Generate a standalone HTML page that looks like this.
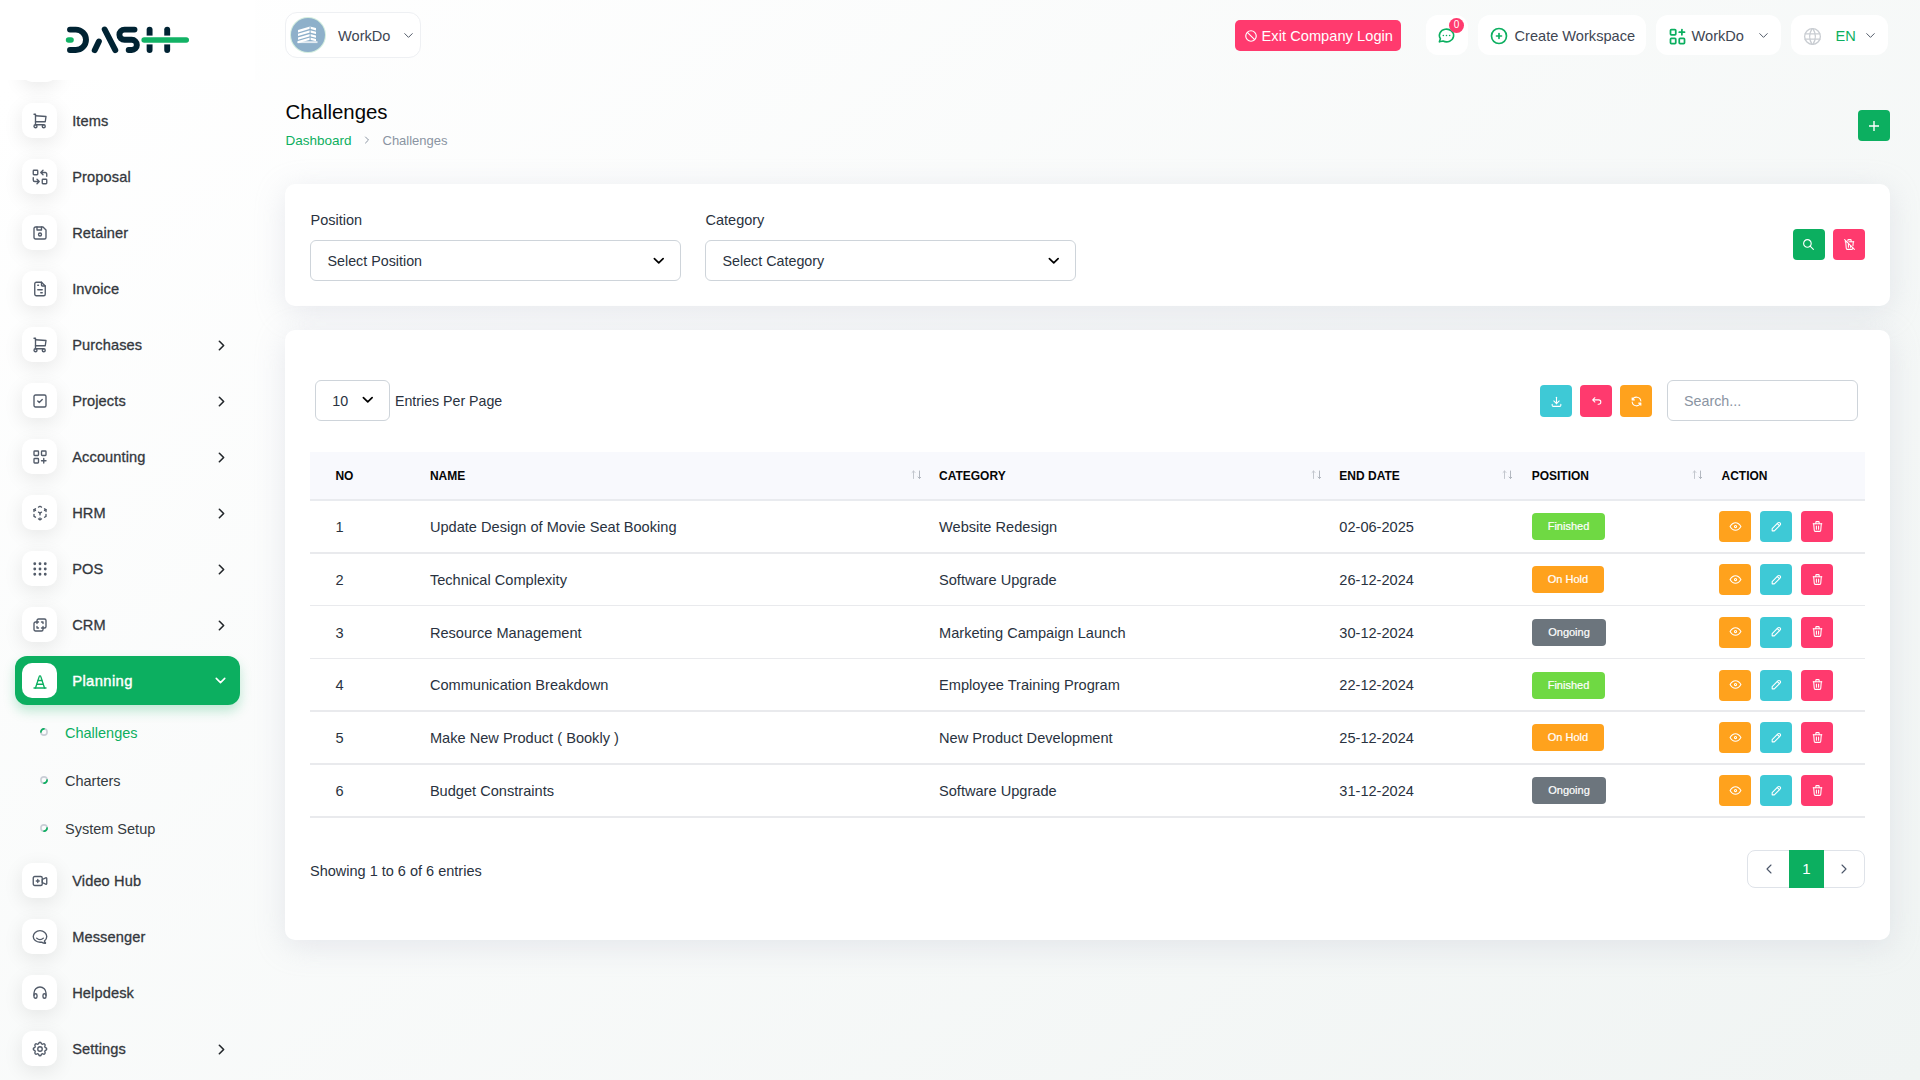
<!DOCTYPE html>
<html><head><meta charset="utf-8"><title>Challenges</title>
<style>
html,body{margin:0;padding:0}
body{width:1920px;height:1080px;overflow:hidden;position:relative;font-family:"Liberation Sans",sans-serif;
background:linear-gradient(141.55deg, rgba(240,244,243,0) 3.46%, #f0f4f3 99.86%), #ffffff;}
.a{position:absolute;box-sizing:content-box}
.t{white-space:nowrap}
.a svg{display:block}
.ib{background:#fff;border-radius:10px;box-shadow:0 5px 20px rgba(0,0,0,0.09)}
.hb{background:#fff;border-radius:12px}
.card{background:#fff;border-radius:10px;box-shadow:0 6px 30px rgba(182,186,203,0.3)}
</style></head><body>
<div class="a ib" style="left:22px;top:46.5px;width:35px;height:35px"></div>
<div class="a" style="left:0;top:0;width:255px;height:80px;background:#fff"></div>
<svg class="a" style="left:0;top:0" width="255" height="80" viewBox="0 0 255 80" fill="none" stroke-linecap="round" stroke-linejoin="round">
<g stroke="#002333" stroke-width="5.9">
<path d="M70 29.6 H75.8 A10.2 10.2 0 0 1 75.8 50 H70"/>
<path d="M94.7 50.2 L98.9 41.5"/>
<path d="M104.7 29.5 L115.3 50.2"/>
<path d="M134.5 29.6 H124.5 A5.1 5.1 0 0 0 124.5 39.8 H131.75 A5.1 5.1 0 0 1 131.75 50 H128.7"/>
<path d="M149.6 29.6 V50"/>
<path d="M167.2 29.6 V50"/>
</g>
<rect x="144" y="35.6" width="28" height="8.8" fill="#fff" stroke="none"/>
<g stroke="#12B265" stroke-width="5.6">
<path d="M68.6 40 H71"/>
<path d="M144.2 40 H186.2"/>
</g>
</svg>
<div class="a ib" style="left:22px;top:102.5px;width:35px;height:35px"></div>
<div class="a" style="left:30.5px;top:112px;width:18px;height:18px"><svg width="18" height="18" viewBox="0 0 24 24" fill="none" stroke="#525b69" stroke-width="1.8" stroke-linecap="round" stroke-linejoin="round" ><circle cx="6" cy="19" r="2"/><circle cx="17" cy="19" r="2"/><path d="M17 17h-11v-14h-2"/><path d="M6 5l14 1l-1 7h-13"/></svg></div>
<div class="a t" style="left:72.2px;top:113.38px;font-size:14.6px;line-height:17.52px;color:#34383d;font-weight:400;letter-spacing:0.12px;-webkit-text-stroke:0.3px #34383d;">Items</div>
<div class="a ib" style="left:22px;top:158.5px;width:35px;height:35px"></div>
<div class="a" style="left:30.5px;top:168px;width:18px;height:18px"><svg width="18" height="18" viewBox="0 0 24 24" fill="none" stroke="#525b69" stroke-width="1.8" stroke-linecap="round" stroke-linejoin="round" ><rect x="3" y="3" width="6" height="6" rx="1"/><rect x="15" y="15" width="6" height="6" rx="1"/><path d="M21 11v-3a2 2 0 0 0 -2 -2h-6l3 3m0 -6l-3 3"/><path d="M3 13v3a2 2 0 0 0 2 2h6l-3 -3m0 6l3 -3"/></svg></div>
<div class="a t" style="left:72.2px;top:169.38px;font-size:14.6px;line-height:17.52px;color:#34383d;font-weight:400;letter-spacing:0.12px;-webkit-text-stroke:0.3px #34383d;">Proposal</div>
<div class="a ib" style="left:22px;top:214.5px;width:35px;height:35px"></div>
<div class="a" style="left:30.5px;top:224px;width:18px;height:18px"><svg width="18" height="18" viewBox="0 0 24 24" fill="none" stroke="#525b69" stroke-width="1.8" stroke-linecap="round" stroke-linejoin="round" ><path d="M6 4h10l4 4v10a2 2 0 0 1 -2 2h-12a2 2 0 0 1 -2 -2v-12a2 2 0 0 1 2 -2"/><circle cx="12" cy="14" r="2"/><polyline points="14 4 14 8 8 8 8 4"/></svg></div>
<div class="a t" style="left:72.2px;top:225.38px;font-size:14.6px;line-height:17.52px;color:#34383d;font-weight:400;letter-spacing:0.12px;-webkit-text-stroke:0.3px #34383d;">Retainer</div>
<div class="a ib" style="left:22px;top:270.5px;width:35px;height:35px"></div>
<div class="a" style="left:30.5px;top:280px;width:18px;height:18px"><svg width="18" height="18" viewBox="0 0 24 24" fill="none" stroke="#525b69" stroke-width="1.8" stroke-linecap="round" stroke-linejoin="round" ><path d="M14 3v4a1 1 0 0 0 1 1h4"/><path d="M17 21h-10a2 2 0 0 1 -2 -2v-14a2 2 0 0 1 2 -2h7l5 5v11a2 2 0 0 1 -2 2z"/><line x1="9" y1="7" x2="10" y2="7"/><line x1="9" y1="13" x2="15" y2="13"/><line x1="13" y1="17" x2="15" y2="17"/></svg></div>
<div class="a t" style="left:72.2px;top:281.38px;font-size:14.6px;line-height:17.52px;color:#34383d;font-weight:400;letter-spacing:0.12px;-webkit-text-stroke:0.3px #34383d;">Invoice</div>
<div class="a ib" style="left:22px;top:326.5px;width:35px;height:35px"></div>
<div class="a" style="left:30.5px;top:336px;width:18px;height:18px"><svg width="18" height="18" viewBox="0 0 24 24" fill="none" stroke="#525b69" stroke-width="1.8" stroke-linecap="round" stroke-linejoin="round" ><circle cx="6" cy="19" r="2"/><circle cx="17" cy="19" r="2"/><path d="M17 17h-11v-14h-2"/><path d="M6 5l14 1l-1 7h-13"/></svg></div>
<div class="a t" style="left:72.2px;top:337.38px;font-size:14.6px;line-height:17.52px;color:#34383d;font-weight:400;letter-spacing:0.12px;-webkit-text-stroke:0.3px #34383d;">Purchases</div>
<div class="a" style="left:213.3px;top:337.35px;width:17px;height:17px"><svg width="17" height="17" viewBox="0 0 24 24" fill="none" stroke="#23272b" stroke-width="2.3" stroke-linecap="round" stroke-linejoin="round" ><polyline points="9 6 15 12 9 18"/></svg></div>
<div class="a ib" style="left:22px;top:382.5px;width:35px;height:35px"></div>
<div class="a" style="left:30.5px;top:392px;width:18px;height:18px"><svg width="18" height="18" viewBox="0 0 24 24" fill="none" stroke="#525b69" stroke-width="1.8" stroke-linecap="round" stroke-linejoin="round" ><rect x="4" y="4" width="16" height="16" rx="2"/><path d="M9 12l2 2l4 -4"/></svg></div>
<div class="a t" style="left:72.2px;top:393.38px;font-size:14.6px;line-height:17.52px;color:#34383d;font-weight:400;letter-spacing:0.12px;-webkit-text-stroke:0.3px #34383d;">Projects</div>
<div class="a" style="left:213.3px;top:393.35px;width:17px;height:17px"><svg width="17" height="17" viewBox="0 0 24 24" fill="none" stroke="#23272b" stroke-width="2.3" stroke-linecap="round" stroke-linejoin="round" ><polyline points="9 6 15 12 9 18"/></svg></div>
<div class="a ib" style="left:22px;top:438.5px;width:35px;height:35px"></div>
<div class="a" style="left:30.5px;top:448px;width:18px;height:18px"><svg width="18" height="18" viewBox="0 0 24 24" fill="none" stroke="#525b69" stroke-width="1.8" stroke-linecap="round" stroke-linejoin="round" ><rect x="4" y="4" width="6" height="6" rx="1"/><rect x="14" y="4" width="6" height="6" rx="1"/><rect x="4" y="14" width="6" height="6" rx="1"/><path d="M14 17h6m-3 -3v6"/></svg></div>
<div class="a t" style="left:72.2px;top:449.38px;font-size:14.6px;line-height:17.52px;color:#34383d;font-weight:400;letter-spacing:0.12px;-webkit-text-stroke:0.3px #34383d;">Accounting</div>
<div class="a" style="left:213.3px;top:449.35px;width:17px;height:17px"><svg width="17" height="17" viewBox="0 0 24 24" fill="none" stroke="#23272b" stroke-width="2.3" stroke-linecap="round" stroke-linejoin="round" ><polyline points="9 6 15 12 9 18"/></svg></div>
<div class="a ib" style="left:22px;top:494.5px;width:35px;height:35px"></div>
<div class="a" style="left:30.5px;top:504px;width:18px;height:18px"><svg width="18" height="18" viewBox="0 0 24 24" fill="none" stroke="#525b69" stroke-width="1.8" stroke-linecap="round" stroke-linejoin="round" ><path d="M6 17.6l-2 -1.1v-2.5"/><path d="M4 10v-2.5l2 -1.1"/><path d="M10 4.1l2 -1.1l2 1.1"/><path d="M18 6.4l2 1.1v2.5"/><path d="M20 14v2.5l-2 1.12"/><path d="M14 19.9l-2 1.1l-2 -1.1"/><line x1="12" y1="12" x2="14" y2="10.9"/><line x1="18" y1="8.6" x2="20" y2="7.5"/><line x1="12" y1="12" x2="12" y2="14.5"/><line x1="12" y1="18.5" x2="12" y2="21"/><path d="M12 12l-2 -1.12"/><line x1="6" y1="8.6" x2="4" y2="7.5"/></svg></div>
<div class="a t" style="left:72.2px;top:505.38px;font-size:14.6px;line-height:17.52px;color:#34383d;font-weight:400;letter-spacing:0.12px;-webkit-text-stroke:0.3px #34383d;">HRM</div>
<div class="a" style="left:213.3px;top:505.35px;width:17px;height:17px"><svg width="17" height="17" viewBox="0 0 24 24" fill="none" stroke="#23272b" stroke-width="2.3" stroke-linecap="round" stroke-linejoin="round" ><polyline points="9 6 15 12 9 18"/></svg></div>
<div class="a ib" style="left:22px;top:550.5px;width:35px;height:35px"></div>
<div class="a" style="left:30.5px;top:560px;width:18px;height:18px"><svg width="18" height="18" viewBox="0 0 24 24" fill="none" stroke="#525b69" stroke-width="1.8" stroke-linecap="round" stroke-linejoin="round" ><circle cx="5" cy="5" r="1"/><circle cx="5" cy="12" r="1"/><circle cx="5" cy="19" r="1"/><circle cx="12" cy="5" r="1"/><circle cx="12" cy="12" r="1"/><circle cx="12" cy="19" r="1"/><circle cx="19" cy="5" r="1"/><circle cx="19" cy="12" r="1"/><circle cx="19" cy="19" r="1"/></svg></div>
<div class="a t" style="left:72.2px;top:561.38px;font-size:14.6px;line-height:17.52px;color:#34383d;font-weight:400;letter-spacing:0.12px;-webkit-text-stroke:0.3px #34383d;">POS</div>
<div class="a" style="left:213.3px;top:561.35px;width:17px;height:17px"><svg width="17" height="17" viewBox="0 0 24 24" fill="none" stroke="#23272b" stroke-width="2.3" stroke-linecap="round" stroke-linejoin="round" ><polyline points="9 6 15 12 9 18"/></svg></div>
<div class="a ib" style="left:22px;top:606.5px;width:35px;height:35px"></div>
<div class="a" style="left:30.5px;top:616px;width:18px;height:18px"><svg width="18" height="18" viewBox="0 0 24 24" fill="none" stroke="#525b69" stroke-width="1.8" stroke-linecap="round" stroke-linejoin="round" ><path d="M16 16v2a2 2 0 0 1 -2 2h-8a2 2 0 0 1 -2 -2v-8a2 2 0 0 1 2 -2h2v-2a2 2 0 0 1 2 -2h8a2 2 0 0 1 2 2v8a2 2 0 0 1 -2 2h-2"/><path d="M10 8l-2 0l0 2"/><path d="M8 14l0 2l2 0"/><path d="M14 8l2 0l0 2"/><path d="M16 14l0 2l-2 0"/></svg></div>
<div class="a t" style="left:72.2px;top:617.38px;font-size:14.6px;line-height:17.52px;color:#34383d;font-weight:400;letter-spacing:0.12px;-webkit-text-stroke:0.3px #34383d;">CRM</div>
<div class="a" style="left:213.3px;top:617.35px;width:17px;height:17px"><svg width="17" height="17" viewBox="0 0 24 24" fill="none" stroke="#23272b" stroke-width="2.3" stroke-linecap="round" stroke-linejoin="round" ><polyline points="9 6 15 12 9 18"/></svg></div>
<div class="a" style="left:15px;top:656px;width:225px;height:49px;background:#0CAF60;border-radius:12px;box-shadow:0 6px 12px rgba(12,175,96,0.25)"></div>
<div class="a" style="left:22px;top:663px;width:35px;height:35px;background:#fff;border-radius:10px"></div>
<div class="a" style="left:30.5px;top:672.5px;width:18px;height:18px"><svg width="18" height="18" viewBox="0 0 24 24" fill="none" stroke="#0CAF60" stroke-width="1.8" stroke-linecap="round" stroke-linejoin="round" ><line x1="4" y1="20" x2="20" y2="20"/><path d="M9.4 10h5.2"/><path d="M7.8 15h8.4"/><path d="M6 20l5 -15.5c.18 -.9 1.82 -.9 2 0l5 15.5"/></svg></div>
<div class="a t" style="left:72.2px;top:673.19px;font-size:14.8px;line-height:17.76px;color:#fff;font-weight:400;letter-spacing:0.38px;-webkit-text-stroke:0.4px #fff;">Planning</div>
<div class="a" style="left:212px;top:672px;width:17px;height:17px"><svg width="17" height="17" viewBox="0 0 24 24" fill="none" stroke="#fff" stroke-width="2.2" stroke-linecap="round" stroke-linejoin="round" ><polyline points="6 9 12 15 18 9"/></svg></div>
<svg class="a" style="left:39px;top:726.7px" width="10" height="10" viewBox="0 0 10 10" fill="none"><circle cx="5" cy="5" r="3.1" stroke="#c9ced6" stroke-width="1.6"/><path d="M1.95 5.6 A3.1 3.1 0 0 1 5.6 1.95" stroke="#0CAF60" stroke-width="1.7"/></svg>
<div class="a t" style="left:65px;top:724.78px;font-size:14.5px;line-height:17.40px;color:#0CAF60;font-weight:400;">Challenges</div>
<svg class="a" style="left:39px;top:774.7px" width="10" height="10" viewBox="0 0 10 10" fill="none"><circle cx="5" cy="5" r="3.1" stroke="#c9ced6" stroke-width="1.6"/><path d="M8.05 4.4 A3.1 3.1 0 0 1 4.4 8.05" stroke="#0CAF60" stroke-width="1.7"/></svg>
<div class="a t" style="left:65px;top:772.78px;font-size:14.5px;line-height:17.40px;color:#343a40;font-weight:400;">Charters</div>
<svg class="a" style="left:39px;top:822.7px" width="10" height="10" viewBox="0 0 10 10" fill="none"><circle cx="5" cy="5" r="3.1" stroke="#c9ced6" stroke-width="1.6"/><path d="M8.05 4.4 A3.1 3.1 0 0 1 4.4 8.05" stroke="#0CAF60" stroke-width="1.7"/></svg>
<div class="a t" style="left:65px;top:820.78px;font-size:14.5px;line-height:17.40px;color:#343a40;font-weight:400;">System Setup</div>
<div class="a ib" style="left:22px;top:862.5px;width:35px;height:35px"></div>
<div class="a" style="left:30.5px;top:872px;width:18px;height:18px"><svg width="18" height="18" viewBox="0 0 24 24" fill="none" stroke="#525b69" stroke-width="1.8" stroke-linecap="round" stroke-linejoin="round" ><path d="M15 10l4.553 -2.276a1 1 0 0 1 1.447 .894v6.764a1 1 0 0 1 -1.447 .894l-4.553 -2.276v-4z"/><rect x="3" y="6" width="12" height="12" rx="2"/><line x1="7" y1="12" x2="11" y2="12"/><line x1="9" y1="10" x2="9" y2="14"/></svg></div>
<div class="a t" style="left:72.2px;top:873.38px;font-size:14.6px;line-height:17.52px;color:#34383d;font-weight:400;letter-spacing:0.12px;-webkit-text-stroke:0.3px #34383d;">Video Hub</div>
<div class="a ib" style="left:22px;top:918.5px;width:35px;height:35px"></div>
<div class="a" style="left:30.5px;top:928px;width:18px;height:18px"><svg width="18" height="18" viewBox="0 0 24 24" fill="none" stroke="#525b69" stroke-width="1.8" stroke-linecap="round" stroke-linejoin="round" ><path d="M17.802 17.292s.077 -.055 .2 -.149c1.843 -1.425 3 -3.49 3 -5.789c0 -4.286 -4.03 -7.764 -9 -7.764c-4.97 0 -9 3.478 -9 7.764c0 4.288 4.03 7.646 9 7.646c.424 0 1.12 -.028 2.088 -.084c1.262 .82 3.104 1.493 4.716 1.493c.499 0 .734 -.41 .414 -.828c-.486 -.596 -1.156 -1.551 -1.416 -2.29z"/><path d="M7.5 13.5c2.5 2.5 6.5 2.5 9 0"/></svg></div>
<div class="a t" style="left:72.2px;top:929.38px;font-size:14.6px;line-height:17.52px;color:#34383d;font-weight:400;letter-spacing:0.12px;-webkit-text-stroke:0.3px #34383d;">Messenger</div>
<div class="a ib" style="left:22px;top:974.5px;width:35px;height:35px"></div>
<div class="a" style="left:30.5px;top:984px;width:18px;height:18px"><svg width="18" height="18" viewBox="0 0 24 24" fill="none" stroke="#525b69" stroke-width="1.8" stroke-linecap="round" stroke-linejoin="round" ><rect x="4" y="13" rx="2" width="4" height="6"/><rect x="16" y="13" rx="2" width="4" height="6"/><path d="M4 15v-3a8 8 0 0 1 16 0v3"/></svg></div>
<div class="a t" style="left:72.2px;top:985.38px;font-size:14.6px;line-height:17.52px;color:#34383d;font-weight:400;letter-spacing:0.12px;-webkit-text-stroke:0.3px #34383d;">Helpdesk</div>
<div class="a ib" style="left:22px;top:1030.5px;width:35px;height:35px"></div>
<div class="a" style="left:30.5px;top:1040px;width:18px;height:18px"><svg width="18" height="18" viewBox="0 0 24 24" fill="none" stroke="#525b69" stroke-width="1.8" stroke-linecap="round" stroke-linejoin="round" ><path d="M10.325 4.317c.426 -1.756 2.924 -1.756 3.35 0a1.724 1.724 0 0 0 2.573 1.066c1.543 -.94 3.31 .826 2.37 2.37a1.724 1.724 0 0 0 1.065 2.572c1.756 .426 1.756 2.924 0 3.35a1.724 1.724 0 0 0 -1.066 2.573c.94 1.543 -.826 3.31 -2.37 2.37a1.724 1.724 0 0 0 -2.572 1.065c-.426 1.756 -2.924 1.756 -3.35 0a1.724 1.724 0 0 0 -2.573 -1.066c-1.543 .94 -3.31 -.826 -2.37 -2.37a1.724 1.724 0 0 0 -1.065 -2.572c-1.756 -.426 -1.756 -2.924 0 -3.35a1.724 1.724 0 0 0 1.066 -2.573c-.94 -1.543 .826 -3.31 2.37 -2.37c1 .608 2.296 .07 2.572 -1.065z"/><circle cx="12" cy="12" r="3"/></svg></div>
<div class="a t" style="left:72.2px;top:1041.38px;font-size:14.6px;line-height:17.52px;color:#34383d;font-weight:400;letter-spacing:0.12px;-webkit-text-stroke:0.3px #34383d;">Settings</div>
<div class="a" style="left:213.3px;top:1041.35px;width:17px;height:17px"><svg width="17" height="17" viewBox="0 0 24 24" fill="none" stroke="#23272b" stroke-width="2.3" stroke-linecap="round" stroke-linejoin="round" ><polyline points="9 6 15 12 9 18"/></svg></div>
<div class="a" style="left:285px;top:12px;width:134px;height:44px;background:#fff;border:1px solid #eef0f3;border-radius:12px"></div>
<div class="a" style="left:291px;top:18px;width:34px;height:34px;border-radius:50%;background:#8eb0ca;box-shadow:0 0 0 1px #d4eedf"></div>
<svg class="a" style="left:291px;top:18px" width="34" height="34" viewBox="0 0 34 34" fill="#fff"><path d="M7 12.1 L19 8.5 L25 10.1 V12.4 L19 10.8 L7 14.4Z"/><path d="M7 15.8 L19 12.2 L25 13.8 V16.1 L19 14.5 L7 18.1Z"/><path d="M7 19.5 L19 15.9 L25 17.5 V19.8 L19 18.2 L7 21.8Z"/><path d="M7 23.0 L19 19.4 L25 21.0 V23.3 L19 21.7 L7 25.3Z"/><rect x="18.6" y="8.5" width="1" height="15" fill="#8eb0ca"/><rect x="6.2" y="23.2" width="20.3" height="1.9" opacity="0.75"/></svg>
<div class="a t" style="left:338px;top:28.38px;font-size:14.6px;line-height:17.52px;color:#3e4653;font-weight:400;">WorkDo</div>
<div class="a" style="left:401px;top:28px;width:15px;height:15px"><svg width="15" height="15" viewBox="0 0 24 24" fill="none" stroke="#525b69" stroke-width="1.6" stroke-linecap="round" stroke-linejoin="round" ><polyline points="6 9 12 15 18 9"/></svg></div>
<div class="a" style="left:1235px;top:20px;width:166px;height:31px;background:#FF3A6E;border-radius:5px"></div>
<div class="a" style="left:1243.5px;top:29px;width:14px;height:14px"><svg width="14" height="14" viewBox="0 0 24 24" fill="none" stroke="#fff" stroke-width="2" stroke-linecap="round" stroke-linejoin="round" ><circle cx="12" cy="12" r="9"/><line x1="5.7" y1="5.7" x2="18.3" y2="18.3"/></svg></div>
<div class="a t" style="left:1261.5px;top:27.88px;font-size:14.6px;line-height:17.52px;color:#fff;font-weight:400;letter-spacing:0.05px;">Exit Company Login</div>
<div class="a hb" style="left:1426px;top:15px;width:42px;height:40px"></div>
<div class="a" style="left:1437px;top:26px;width:19px;height:19px"><svg width="19" height="19" viewBox="0 0 24 24" fill="none" stroke="#0CAF60" stroke-width="2" stroke-linecap="round" stroke-linejoin="round" ><path d="M3 20l1.3 -3.9a9 8 0 1 1 3.4 2.9l-4.7 1"/><line x1="12" y1="12" x2="12" y2="12.01"/><line x1="8" y1="12" x2="8" y2="12.01"/><line x1="16" y1="12" x2="16" y2="12.01"/></svg></div>
<div class="a" style="left:1449px;top:18px;width:15px;height:15px;border-radius:50%;background:#FF3A6E;color:#fff;font-size:10px;line-height:14px;text-align:center">0</div>
<div class="a hb" style="left:1478px;top:15px;width:168px;height:40px"></div>
<div class="a" style="left:1489.1px;top:25.9px;width:20px;height:20px"><svg width="20" height="20" viewBox="0 0 24 24" fill="none" stroke="#0CAF60" stroke-width="2" stroke-linecap="round" stroke-linejoin="round" ><circle cx="12" cy="12" r="9"/><line x1="9" y1="12" x2="15" y2="12"/><line x1="12" y1="9" x2="12" y2="15"/></svg></div>
<div class="a t" style="left:1514.5px;top:28.48px;font-size:14.6px;line-height:17.52px;color:#3e4653;font-weight:400;">Create Workspace</div>
<div class="a hb" style="left:1656px;top:15px;width:125px;height:40px"></div>
<div class="a" style="left:1666.5px;top:25.5px;width:21px;height:21px"><svg width="21" height="21" viewBox="0 0 24 24" fill="none" stroke="#0CAF60" stroke-width="2" stroke-linecap="round" stroke-linejoin="round" ><rect x="4" y="4" width="6" height="6" rx="1"/><rect x="4" y="14" width="6" height="6" rx="1"/><rect x="14" y="14" width="6" height="6" rx="1"/><line x1="14" y1="7" x2="20" y2="7"/><line x1="17" y1="4" x2="17" y2="10"/></svg></div>
<div class="a t" style="left:1691.5px;top:28.48px;font-size:14.6px;line-height:17.52px;color:#3e4653;font-weight:400;">WorkDo</div>
<div class="a" style="left:1755.5px;top:28px;width:15px;height:15px"><svg width="15" height="15" viewBox="0 0 24 24" fill="none" stroke="#525b69" stroke-width="1.6" stroke-linecap="round" stroke-linejoin="round" ><polyline points="6 9 12 15 18 9"/></svg></div>
<div class="a hb" style="left:1791px;top:15px;width:97px;height:40px"></div>
<div class="a" style="left:1801.6px;top:25.5px;width:21px;height:21px"><svg width="21" height="21" viewBox="0 0 24 24" fill="none" stroke="#c9cdd2" stroke-width="1.5" stroke-linecap="round" stroke-linejoin="round" ><circle cx="12" cy="12" r="9"/><line x1="3.6" y1="9" x2="20.4" y2="9"/><line x1="3.6" y1="15" x2="20.4" y2="15"/><path d="M11.5 3a17 17 0 0 0 0 18"/><path d="M12.5 3a17 17 0 0 1 0 18"/></svg></div>
<div class="a t" style="left:1835.5px;top:28.48px;font-size:14.6px;line-height:17.52px;color:#0CAF60;font-weight:400;">EN</div>
<div class="a" style="left:1863px;top:28px;width:15px;height:15px"><svg width="15" height="15" viewBox="0 0 24 24" fill="none" stroke="#525b69" stroke-width="1.6" stroke-linecap="round" stroke-linejoin="round" ><polyline points="6 9 12 15 18 9"/></svg></div>
<div class="a t" style="left:285.5px;top:100.29px;font-size:20.4px;line-height:24.48px;color:#060606;font-weight:400;">Challenges</div>
<div class="a t" style="left:285.5px;top:132.92px;font-size:13.5px;line-height:16.20px;color:#0CAF60;font-weight:400;">Dashboard</div>
<div class="a" style="left:361px;top:134px;width:12px;height:12px"><svg width="12" height="12" viewBox="0 0 24 24" fill="none" stroke="#8a94a2" stroke-width="2" stroke-linecap="round" stroke-linejoin="round" ><polyline points="9 6 15 12 9 18"/></svg></div>
<div class="a t" style="left:382.5px;top:133.40px;font-size:13px;line-height:15.60px;color:#8a94a2;font-weight:400;">Challenges</div>
<div class="a" style="left:1858px;top:110px;width:32px;height:31px;background:#0CAF60;border-radius:4px"></div>
<svg class="a" style="left:1869px;top:120.5px" width="10" height="10" viewBox="0 0 10 10" stroke="#fff" stroke-width="1.4"><path d="M0 5H10M5 0V10"/></svg>
<div class="a card" style="left:285px;top:184px;width:1605px;height:122px"></div>
<div class="a t" style="left:310.5px;top:212.18px;font-size:14.5px;line-height:17.40px;color:#293240;font-weight:400;">Position</div>
<div class="a t" style="left:705.5px;top:212.18px;font-size:14.5px;line-height:17.40px;color:#293240;font-weight:400;">Category</div>
<div class="a" style="left:310px;top:240px;width:369px;height:39px;border:1px solid #ced4da;border-radius:6px;background:#fff"></div>
<div class="a t" style="left:327.5px;top:253.17px;font-size:14.3px;line-height:17.16px;color:#293240;font-weight:400;">Select Position</div>
<div class="a" style="left:650.25px;top:251.5px;width:17.5px;height:17.5px"><svg width="17.5" height="17.5" viewBox="0 0 24 24" fill="none" stroke="#000" stroke-width="2.3" stroke-linecap="round" stroke-linejoin="round" ><polyline points="6 9 12 15 18 9"/></svg></div>
<div class="a" style="left:705px;top:240px;width:369px;height:39px;border:1px solid #ced4da;border-radius:6px;background:#fff"></div>
<div class="a t" style="left:722.5px;top:253.17px;font-size:14.3px;line-height:17.16px;color:#293240;font-weight:400;">Select Category</div>
<div class="a" style="left:1045.25px;top:251.5px;width:17.5px;height:17.5px"><svg width="17.5" height="17.5" viewBox="0 0 24 24" fill="none" stroke="#000" stroke-width="2.3" stroke-linecap="round" stroke-linejoin="round" ><polyline points="6 9 12 15 18 9"/></svg></div>
<div class="a" style="left:1793px;top:229px;width:32px;height:31px;background:#0CAF60;border-radius:4px"></div>
<div class="a" style="left:1801.8px;top:238px;width:13px;height:13px"><svg width="13" height="13" viewBox="0 0 24 24" fill="none" stroke="#fff" stroke-width="2.1" stroke-linecap="round" stroke-linejoin="round" ><circle cx="10" cy="10" r="7"/><line x1="21" y1="21" x2="15" y2="15"/></svg></div>
<div class="a" style="left:1833px;top:229px;width:32px;height:31px;background:#FF3A6E;border-radius:4px"></div>
<div class="a" style="left:1842.5px;top:238px;width:13px;height:13px"><svg width="13" height="13" viewBox="0 0 24 24" fill="none" stroke="#fff" stroke-width="2" stroke-linecap="round" stroke-linejoin="round" ><path d="M3 3l18 18"/><path d="M4 7h3m4 0h9"/><line x1="10" y1="11" x2="10" y2="17"/><line x1="14" y1="14" x2="14" y2="17"/><path d="M5 7l1 12a2 2 0 0 0 2 2h8a2 2 0 0 0 2 -2l.077 -.923"/><line x1="18.384" y1="14.373" x2="19" y2="7"/><path d="M9 5v-1a1 1 0 0 1 1 -1h4a1 1 0 0 1 1 1v3"/></svg></div>
<div class="a card" style="left:285px;top:330px;width:1605px;height:610px"></div>
<div class="a" style="left:315px;top:380px;width:73px;height:39px;border:1px solid #ced4da;border-radius:6px;background:#fff"></div>
<div class="a t" style="left:332.3px;top:393.47px;font-size:14.3px;line-height:17.16px;color:#293240;font-weight:400;">10</div>
<div class="a" style="left:359.25px;top:391.3px;width:17.5px;height:17.5px"><svg width="17.5" height="17.5" viewBox="0 0 24 24" fill="none" stroke="#000" stroke-width="2.3" stroke-linecap="round" stroke-linejoin="round" ><polyline points="6 9 12 15 18 9"/></svg></div>
<div class="a t" style="left:395px;top:392.76px;font-size:14.2px;line-height:17.04px;color:#293240;font-weight:400;">Entries Per Page</div>
<div class="a" style="left:1540px;top:385px;width:32px;height:32px;background:#3EC9D6;border-radius:4px"></div>
<div class="a" style="left:1549.5px;top:394.5px;width:13px;height:13px"><svg width="13" height="13" viewBox="0 0 24 24" fill="none" stroke="#fff" stroke-width="2" stroke-linecap="round" stroke-linejoin="round" ><path d="M4 17v2a2 2 0 0 0 2 2h12a2 2 0 0 0 2 -2v-2"/><polyline points="7 11 12 16 17 11"/><line x1="12" y1="4" x2="12" y2="16"/></svg></div>
<div class="a" style="left:1580px;top:385px;width:32px;height:32px;background:#FF3A6E;border-radius:4px"></div>
<div class="a" style="left:1589.5px;top:394.5px;width:13px;height:13px"><svg width="13" height="13" viewBox="0 0 24 24" fill="none" stroke="#fff" stroke-width="2" stroke-linecap="round" stroke-linejoin="round" ><path d="M9 13l-4 -4l4 -4m-4 4h11a4 4 0 0 1 0 8h-1"/></svg></div>
<div class="a" style="left:1620px;top:385px;width:32px;height:32px;background:#FFA21D;border-radius:4px"></div>
<div class="a" style="left:1629.5px;top:394.5px;width:13px;height:13px"><svg width="13" height="13" viewBox="0 0 24 24" fill="none" stroke="#fff" stroke-width="2" stroke-linecap="round" stroke-linejoin="round" ><path d="M20 11a8.1 8.1 0 0 0 -15.5 -2m-.5 -4v4h4"/><path d="M4 13a8.1 8.1 0 0 0 15.5 2m.5 4v-4h-4"/></svg></div>
<div class="a" style="left:1667px;top:380px;width:189px;height:39px;border:1px solid #ced4da;border-radius:6px;background:#fff"></div>
<div class="a t" style="left:1684px;top:393.47px;font-size:14.3px;line-height:17.16px;color:#8a94a2;font-weight:400;">Search...</div>
<div class="a" style="left:310px;top:452px;width:1555px;height:47px;background:#f8f9fd;border-bottom:2px solid #e9ebef"></div>
<div class="a t" style="left:335.4px;top:469.04px;font-size:12px;line-height:14.40px;color:#060606;font-weight:700;">NO</div>
<div class="a t" style="left:429.9px;top:469.04px;font-size:12px;line-height:14.40px;color:#060606;font-weight:700;">NAME</div>
<div class="a t" style="left:939px;top:469.04px;font-size:12px;line-height:14.40px;color:#060606;font-weight:700;">CATEGORY</div>
<div class="a t" style="left:1339.3px;top:469.04px;font-size:12px;line-height:14.40px;color:#060606;font-weight:700;">END DATE</div>
<div class="a t" style="left:1531.7px;top:469.04px;font-size:12px;line-height:14.40px;color:#060606;font-weight:700;">POSITION</div>
<div class="a t" style="left:1721.5px;top:469.04px;font-size:12px;line-height:14.40px;color:#060606;font-weight:700;">ACTION</div>
<svg class="a" style="left:910.5px;top:469px" width="10" height="11" viewBox="0 0 10 11" fill="none" stroke="#c3c7ce" stroke-width="1" stroke-linecap="round"><path d="M2.5 9.5V2M1 3.5L2.5 2L4 3.5"/><path d="M8.5 2V9.5M7 8L8.5 9.5L10 8" stroke="#b3b8c0"/></svg>
<svg class="a" style="left:1310.6px;top:469px" width="10" height="11" viewBox="0 0 10 11" fill="none" stroke="#c3c7ce" stroke-width="1" stroke-linecap="round"><path d="M2.5 9.5V2M1 3.5L2.5 2L4 3.5"/><path d="M8.5 2V9.5M7 8L8.5 9.5L10 8" stroke="#b3b8c0"/></svg>
<svg class="a" style="left:1502px;top:469px" width="10" height="11" viewBox="0 0 10 11" fill="none" stroke="#c3c7ce" stroke-width="1" stroke-linecap="round"><path d="M2.5 9.5V2M1 3.5L2.5 2L4 3.5"/><path d="M8.5 2V9.5M7 8L8.5 9.5L10 8" stroke="#b3b8c0"/></svg>
<svg class="a" style="left:1692px;top:469px" width="10" height="11" viewBox="0 0 10 11" fill="none" stroke="#c3c7ce" stroke-width="1" stroke-linecap="round"><path d="M2.5 9.5V2M1 3.5L2.5 2L4 3.5"/><path d="M8.5 2V9.5M7 8L8.5 9.5L10 8" stroke="#b3b8c0"/></svg>
<div class="a t" style="left:335.4px;top:518.98px;font-size:14.6px;line-height:17.52px;color:#293240;font-weight:400;">1</div>
<div class="a t" style="left:429.9px;top:518.98px;font-size:14.6px;line-height:17.52px;color:#293240;font-weight:400;">Update Design of Movie Seat Booking</div>
<div class="a t" style="left:939px;top:518.98px;font-size:14.6px;line-height:17.52px;color:#293240;font-weight:400;">Website Redesign</div>
<div class="a t" style="left:1339.3px;top:518.98px;font-size:14.6px;line-height:17.52px;color:#293240;font-weight:400;">02-06-2025</div>
<div class="a t" style="left:1532px;top:513.2px;width:73px;height:27px;background:#6FD943;border-radius:4px;color:#fff;font-size:11px;font-weight:400;-webkit-text-stroke:0.2px #fff;line-height:27px;text-align:center">Finished</div>
<div class="a" style="left:1719px;top:511.2px;width:32px;height:31px;background:#FFA21D;border-radius:4px"></div>
<div class="a" style="left:1728.5px;top:519.7px;width:13px;height:13px"><svg width="13" height="13" viewBox="0 0 24 24" fill="none" stroke="#fff" stroke-width="2" stroke-linecap="round" stroke-linejoin="round" ><circle cx="12" cy="12" r="2"/><path d="M22 12c-2.667 4.667 -6 7 -10 7s-7.333 -2.333 -10 -7c2.667 -4.667 6 -7 10 -7s7.333 2.333 10 7"/></svg></div>
<div class="a" style="left:1760px;top:511.2px;width:32px;height:31px;background:#3EC9D6;border-radius:4px"></div>
<div class="a" style="left:1769.5px;top:519.7px;width:13px;height:13px"><svg width="13" height="13" viewBox="0 0 24 24" fill="none" stroke="#fff" stroke-width="2" stroke-linecap="round" stroke-linejoin="round" ><path d="M4 20h4l10.5 -10.5a1.5 1.5 0 0 0 -4 -4l-10.5 10.5v4"/><line x1="13.5" y1="6.5" x2="17.5" y2="10.5"/></svg></div>
<div class="a" style="left:1801px;top:511.2px;width:32px;height:31px;background:#FF3A6E;border-radius:4px"></div>
<div class="a" style="left:1810.5px;top:519.7px;width:13px;height:13px"><svg width="13" height="13" viewBox="0 0 24 24" fill="none" stroke="#fff" stroke-width="2" stroke-linecap="round" stroke-linejoin="round" ><line x1="4" y1="7" x2="20" y2="7"/><line x1="10" y1="11" x2="10" y2="17"/><line x1="14" y1="11" x2="14" y2="17"/><path d="M5 7l1 12a2 2 0 0 0 2 2h8a2 2 0 0 0 2 -2l1 -12"/><path d="M9 7v-3a1 1 0 0 1 1 -1h4a1 1 0 0 1 1 1v3"/></svg></div>
<div class="a" style="left:310px;top:552.0px;width:1555px;height:1.5px;background:#e9eaed"></div>
<div class="a t" style="left:335.4px;top:571.78px;font-size:14.6px;line-height:17.52px;color:#293240;font-weight:400;">2</div>
<div class="a t" style="left:429.9px;top:571.78px;font-size:14.6px;line-height:17.52px;color:#293240;font-weight:400;">Technical Complexity</div>
<div class="a t" style="left:939px;top:571.78px;font-size:14.6px;line-height:17.52px;color:#293240;font-weight:400;">Software Upgrade</div>
<div class="a t" style="left:1339.3px;top:571.78px;font-size:14.6px;line-height:17.52px;color:#293240;font-weight:400;">26-12-2024</div>
<div class="a t" style="left:1532px;top:566.0px;width:72px;height:27px;background:#FFA21D;border-radius:4px;color:#fff;font-size:11px;font-weight:400;-webkit-text-stroke:0.2px #fff;line-height:27px;text-align:center">On Hold</div>
<div class="a" style="left:1719px;top:564.0px;width:32px;height:31px;background:#FFA21D;border-radius:4px"></div>
<div class="a" style="left:1728.5px;top:572.5px;width:13px;height:13px"><svg width="13" height="13" viewBox="0 0 24 24" fill="none" stroke="#fff" stroke-width="2" stroke-linecap="round" stroke-linejoin="round" ><circle cx="12" cy="12" r="2"/><path d="M22 12c-2.667 4.667 -6 7 -10 7s-7.333 -2.333 -10 -7c2.667 -4.667 6 -7 10 -7s7.333 2.333 10 7"/></svg></div>
<div class="a" style="left:1760px;top:564.0px;width:32px;height:31px;background:#3EC9D6;border-radius:4px"></div>
<div class="a" style="left:1769.5px;top:572.5px;width:13px;height:13px"><svg width="13" height="13" viewBox="0 0 24 24" fill="none" stroke="#fff" stroke-width="2" stroke-linecap="round" stroke-linejoin="round" ><path d="M4 20h4l10.5 -10.5a1.5 1.5 0 0 0 -4 -4l-10.5 10.5v4"/><line x1="13.5" y1="6.5" x2="17.5" y2="10.5"/></svg></div>
<div class="a" style="left:1801px;top:564.0px;width:32px;height:31px;background:#FF3A6E;border-radius:4px"></div>
<div class="a" style="left:1810.5px;top:572.5px;width:13px;height:13px"><svg width="13" height="13" viewBox="0 0 24 24" fill="none" stroke="#fff" stroke-width="2" stroke-linecap="round" stroke-linejoin="round" ><line x1="4" y1="7" x2="20" y2="7"/><line x1="10" y1="11" x2="10" y2="17"/><line x1="14" y1="11" x2="14" y2="17"/><path d="M5 7l1 12a2 2 0 0 0 2 2h8a2 2 0 0 0 2 -2l1 -12"/><path d="M9 7v-3a1 1 0 0 1 1 -1h4a1 1 0 0 1 1 1v3"/></svg></div>
<div class="a" style="left:310px;top:604.8px;width:1555px;height:1.5px;background:#e9eaed"></div>
<div class="a t" style="left:335.4px;top:624.58px;font-size:14.6px;line-height:17.52px;color:#293240;font-weight:400;">3</div>
<div class="a t" style="left:429.9px;top:624.58px;font-size:14.6px;line-height:17.52px;color:#293240;font-weight:400;">Resource Management</div>
<div class="a t" style="left:939px;top:624.58px;font-size:14.6px;line-height:17.52px;color:#293240;font-weight:400;">Marketing Campaign Launch</div>
<div class="a t" style="left:1339.3px;top:624.58px;font-size:14.6px;line-height:17.52px;color:#293240;font-weight:400;">30-12-2024</div>
<div class="a t" style="left:1532px;top:618.8px;width:74px;height:27px;background:#6c757d;border-radius:4px;color:#fff;font-size:11px;font-weight:400;-webkit-text-stroke:0.2px #fff;line-height:27px;text-align:center">Ongoing</div>
<div class="a" style="left:1719px;top:616.8px;width:32px;height:31px;background:#FFA21D;border-radius:4px"></div>
<div class="a" style="left:1728.5px;top:625.3000000000001px;width:13px;height:13px"><svg width="13" height="13" viewBox="0 0 24 24" fill="none" stroke="#fff" stroke-width="2" stroke-linecap="round" stroke-linejoin="round" ><circle cx="12" cy="12" r="2"/><path d="M22 12c-2.667 4.667 -6 7 -10 7s-7.333 -2.333 -10 -7c2.667 -4.667 6 -7 10 -7s7.333 2.333 10 7"/></svg></div>
<div class="a" style="left:1760px;top:616.8px;width:32px;height:31px;background:#3EC9D6;border-radius:4px"></div>
<div class="a" style="left:1769.5px;top:625.3000000000001px;width:13px;height:13px"><svg width="13" height="13" viewBox="0 0 24 24" fill="none" stroke="#fff" stroke-width="2" stroke-linecap="round" stroke-linejoin="round" ><path d="M4 20h4l10.5 -10.5a1.5 1.5 0 0 0 -4 -4l-10.5 10.5v4"/><line x1="13.5" y1="6.5" x2="17.5" y2="10.5"/></svg></div>
<div class="a" style="left:1801px;top:616.8px;width:32px;height:31px;background:#FF3A6E;border-radius:4px"></div>
<div class="a" style="left:1810.5px;top:625.3000000000001px;width:13px;height:13px"><svg width="13" height="13" viewBox="0 0 24 24" fill="none" stroke="#fff" stroke-width="2" stroke-linecap="round" stroke-linejoin="round" ><line x1="4" y1="7" x2="20" y2="7"/><line x1="10" y1="11" x2="10" y2="17"/><line x1="14" y1="11" x2="14" y2="17"/><path d="M5 7l1 12a2 2 0 0 0 2 2h8a2 2 0 0 0 2 -2l1 -12"/><path d="M9 7v-3a1 1 0 0 1 1 -1h4a1 1 0 0 1 1 1v3"/></svg></div>
<div class="a" style="left:310px;top:657.6px;width:1555px;height:1.5px;background:#e9eaed"></div>
<div class="a t" style="left:335.4px;top:677.38px;font-size:14.6px;line-height:17.52px;color:#293240;font-weight:400;">4</div>
<div class="a t" style="left:429.9px;top:677.38px;font-size:14.6px;line-height:17.52px;color:#293240;font-weight:400;">Communication Breakdown</div>
<div class="a t" style="left:939px;top:677.38px;font-size:14.6px;line-height:17.52px;color:#293240;font-weight:400;">Employee Training Program</div>
<div class="a t" style="left:1339.3px;top:677.38px;font-size:14.6px;line-height:17.52px;color:#293240;font-weight:400;">22-12-2024</div>
<div class="a t" style="left:1532px;top:671.6px;width:73px;height:27px;background:#6FD943;border-radius:4px;color:#fff;font-size:11px;font-weight:400;-webkit-text-stroke:0.2px #fff;line-height:27px;text-align:center">Finished</div>
<div class="a" style="left:1719px;top:669.6px;width:32px;height:31px;background:#FFA21D;border-radius:4px"></div>
<div class="a" style="left:1728.5px;top:678.1px;width:13px;height:13px"><svg width="13" height="13" viewBox="0 0 24 24" fill="none" stroke="#fff" stroke-width="2" stroke-linecap="round" stroke-linejoin="round" ><circle cx="12" cy="12" r="2"/><path d="M22 12c-2.667 4.667 -6 7 -10 7s-7.333 -2.333 -10 -7c2.667 -4.667 6 -7 10 -7s7.333 2.333 10 7"/></svg></div>
<div class="a" style="left:1760px;top:669.6px;width:32px;height:31px;background:#3EC9D6;border-radius:4px"></div>
<div class="a" style="left:1769.5px;top:678.1px;width:13px;height:13px"><svg width="13" height="13" viewBox="0 0 24 24" fill="none" stroke="#fff" stroke-width="2" stroke-linecap="round" stroke-linejoin="round" ><path d="M4 20h4l10.5 -10.5a1.5 1.5 0 0 0 -4 -4l-10.5 10.5v4"/><line x1="13.5" y1="6.5" x2="17.5" y2="10.5"/></svg></div>
<div class="a" style="left:1801px;top:669.6px;width:32px;height:31px;background:#FF3A6E;border-radius:4px"></div>
<div class="a" style="left:1810.5px;top:678.1px;width:13px;height:13px"><svg width="13" height="13" viewBox="0 0 24 24" fill="none" stroke="#fff" stroke-width="2" stroke-linecap="round" stroke-linejoin="round" ><line x1="4" y1="7" x2="20" y2="7"/><line x1="10" y1="11" x2="10" y2="17"/><line x1="14" y1="11" x2="14" y2="17"/><path d="M5 7l1 12a2 2 0 0 0 2 2h8a2 2 0 0 0 2 -2l1 -12"/><path d="M9 7v-3a1 1 0 0 1 1 -1h4a1 1 0 0 1 1 1v3"/></svg></div>
<div class="a" style="left:310px;top:710.4px;width:1555px;height:1.5px;background:#e9eaed"></div>
<div class="a t" style="left:335.4px;top:730.18px;font-size:14.6px;line-height:17.52px;color:#293240;font-weight:400;">5</div>
<div class="a t" style="left:429.9px;top:730.18px;font-size:14.6px;line-height:17.52px;color:#293240;font-weight:400;">Make New Product ( Bookly )</div>
<div class="a t" style="left:939px;top:730.18px;font-size:14.6px;line-height:17.52px;color:#293240;font-weight:400;">New Product Development</div>
<div class="a t" style="left:1339.3px;top:730.18px;font-size:14.6px;line-height:17.52px;color:#293240;font-weight:400;">25-12-2024</div>
<div class="a t" style="left:1532px;top:724.4px;width:72px;height:27px;background:#FFA21D;border-radius:4px;color:#fff;font-size:11px;font-weight:400;-webkit-text-stroke:0.2px #fff;line-height:27px;text-align:center">On Hold</div>
<div class="a" style="left:1719px;top:722.4px;width:32px;height:31px;background:#FFA21D;border-radius:4px"></div>
<div class="a" style="left:1728.5px;top:730.9000000000001px;width:13px;height:13px"><svg width="13" height="13" viewBox="0 0 24 24" fill="none" stroke="#fff" stroke-width="2" stroke-linecap="round" stroke-linejoin="round" ><circle cx="12" cy="12" r="2"/><path d="M22 12c-2.667 4.667 -6 7 -10 7s-7.333 -2.333 -10 -7c2.667 -4.667 6 -7 10 -7s7.333 2.333 10 7"/></svg></div>
<div class="a" style="left:1760px;top:722.4px;width:32px;height:31px;background:#3EC9D6;border-radius:4px"></div>
<div class="a" style="left:1769.5px;top:730.9000000000001px;width:13px;height:13px"><svg width="13" height="13" viewBox="0 0 24 24" fill="none" stroke="#fff" stroke-width="2" stroke-linecap="round" stroke-linejoin="round" ><path d="M4 20h4l10.5 -10.5a1.5 1.5 0 0 0 -4 -4l-10.5 10.5v4"/><line x1="13.5" y1="6.5" x2="17.5" y2="10.5"/></svg></div>
<div class="a" style="left:1801px;top:722.4px;width:32px;height:31px;background:#FF3A6E;border-radius:4px"></div>
<div class="a" style="left:1810.5px;top:730.9000000000001px;width:13px;height:13px"><svg width="13" height="13" viewBox="0 0 24 24" fill="none" stroke="#fff" stroke-width="2" stroke-linecap="round" stroke-linejoin="round" ><line x1="4" y1="7" x2="20" y2="7"/><line x1="10" y1="11" x2="10" y2="17"/><line x1="14" y1="11" x2="14" y2="17"/><path d="M5 7l1 12a2 2 0 0 0 2 2h8a2 2 0 0 0 2 -2l1 -12"/><path d="M9 7v-3a1 1 0 0 1 1 -1h4a1 1 0 0 1 1 1v3"/></svg></div>
<div class="a" style="left:310px;top:763.2px;width:1555px;height:1.5px;background:#e9eaed"></div>
<div class="a t" style="left:335.4px;top:782.98px;font-size:14.6px;line-height:17.52px;color:#293240;font-weight:400;">6</div>
<div class="a t" style="left:429.9px;top:782.98px;font-size:14.6px;line-height:17.52px;color:#293240;font-weight:400;">Budget Constraints</div>
<div class="a t" style="left:939px;top:782.98px;font-size:14.6px;line-height:17.52px;color:#293240;font-weight:400;">Software Upgrade</div>
<div class="a t" style="left:1339.3px;top:782.98px;font-size:14.6px;line-height:17.52px;color:#293240;font-weight:400;">31-12-2024</div>
<div class="a t" style="left:1532px;top:777.2px;width:74px;height:27px;background:#6c757d;border-radius:4px;color:#fff;font-size:11px;font-weight:400;-webkit-text-stroke:0.2px #fff;line-height:27px;text-align:center">Ongoing</div>
<div class="a" style="left:1719px;top:775.2px;width:32px;height:31px;background:#FFA21D;border-radius:4px"></div>
<div class="a" style="left:1728.5px;top:783.7px;width:13px;height:13px"><svg width="13" height="13" viewBox="0 0 24 24" fill="none" stroke="#fff" stroke-width="2" stroke-linecap="round" stroke-linejoin="round" ><circle cx="12" cy="12" r="2"/><path d="M22 12c-2.667 4.667 -6 7 -10 7s-7.333 -2.333 -10 -7c2.667 -4.667 6 -7 10 -7s7.333 2.333 10 7"/></svg></div>
<div class="a" style="left:1760px;top:775.2px;width:32px;height:31px;background:#3EC9D6;border-radius:4px"></div>
<div class="a" style="left:1769.5px;top:783.7px;width:13px;height:13px"><svg width="13" height="13" viewBox="0 0 24 24" fill="none" stroke="#fff" stroke-width="2" stroke-linecap="round" stroke-linejoin="round" ><path d="M4 20h4l10.5 -10.5a1.5 1.5 0 0 0 -4 -4l-10.5 10.5v4"/><line x1="13.5" y1="6.5" x2="17.5" y2="10.5"/></svg></div>
<div class="a" style="left:1801px;top:775.2px;width:32px;height:31px;background:#FF3A6E;border-radius:4px"></div>
<div class="a" style="left:1810.5px;top:783.7px;width:13px;height:13px"><svg width="13" height="13" viewBox="0 0 24 24" fill="none" stroke="#fff" stroke-width="2" stroke-linecap="round" stroke-linejoin="round" ><line x1="4" y1="7" x2="20" y2="7"/><line x1="10" y1="11" x2="10" y2="17"/><line x1="14" y1="11" x2="14" y2="17"/><path d="M5 7l1 12a2 2 0 0 0 2 2h8a2 2 0 0 0 2 -2l1 -12"/><path d="M9 7v-3a1 1 0 0 1 1 -1h4a1 1 0 0 1 1 1v3"/></svg></div>
<div class="a" style="left:310px;top:816.0px;width:1555px;height:1.5px;background:#e9eaed"></div>
<div class="a t" style="left:310px;top:863.48px;font-size:14.5px;line-height:17.40px;color:#293240;font-weight:400;">Showing 1 to 6 of 6 entries</div>
<div class="a" style="left:1747px;top:850px;width:116px;height:36px;border:1px solid #dfe3e9;border-radius:8px;background:#fff"></div>
<div class="a" style="left:1789px;top:850px;width:35px;height:38px;background:#0CAF60"></div>
<div class="a t" style="left:1789px;top:850px;width:35px;height:38px;line-height:38px;text-align:center;color:#fff;font-size:15px">1</div>
<div class="a" style="left:1760.75px;top:860.5px;width:16px;height:16px"><svg width="16" height="16" viewBox="0 0 24 24" fill="none" stroke="#4a5568" stroke-width="1.6" stroke-linecap="round" stroke-linejoin="round" ><polyline points="15 6 9 12 15 18"/></svg></div>
<div class="a" style="left:1835.75px;top:860.5px;width:16px;height:16px"><svg width="16" height="16" viewBox="0 0 24 24" fill="none" stroke="#4a5568" stroke-width="1.6" stroke-linecap="round" stroke-linejoin="round" ><polyline points="9 6 15 12 9 18"/></svg></div>
</body></html>
